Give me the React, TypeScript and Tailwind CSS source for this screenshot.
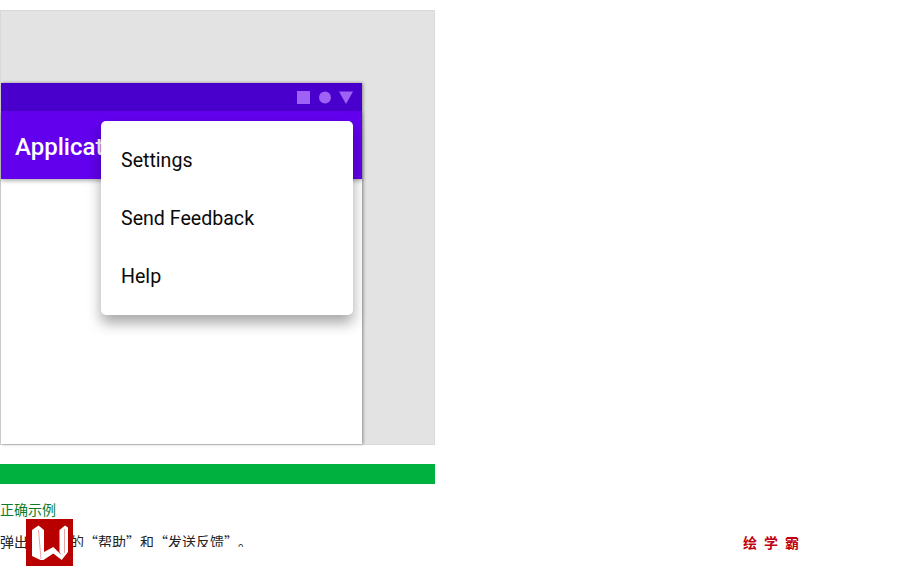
const cjk = "font-['Microsoft_YaHei','Noto_Sans_CJK_SC',sans-serif]";

function StatusIcons() {
  return (
    <div className="flex items-center justify-end gap-[9px] h-[28px] pr-[9px] bg-[#4a00cc]">
      <svg width="13" height="13" viewBox="0 0 13 13">
        <rect width="13" height="13" fill="#9e62f5" />
      </svg>
      <svg width="12" height="13" viewBox="0 0 12 13">
        <circle cx="6" cy="6.5" r="6" fill="#9e62f5" />
      </svg>
      <svg width="14" height="13" viewBox="0 0 14 13" className="-ml-px">
        <path d="M0 0.5H14L7 13Z" fill="#9e62f5" />
      </svg>
    </div>
  );
}

function Logo() {
  return (
    <svg width="47" height="47" viewBox="0 0 47 47" className="absolute left-[26px] top-[519px]">
      <rect width="47" height="47" fill="#b90000" />
      <path
        d="M6 11L12.5 6.5L18 11V33L27.3 28L35.5 36L33.5 33V11L39 6.5L42 8.5V33L35.7 41L27.3 34.5L17.5 41L14.5 41L6 37Z"
        fill="#fff"
      />
      <path d="M12.5 11L15 40" stroke="#e8a8a8" strokeWidth="1" />
      <path d="M38.5 10V34" stroke="#e8a8a8" strokeWidth="1" />
    </svg>
  );
}

export default function App() {
  return (
    <div className="relative h-[585px] w-[899px] overflow-hidden bg-white">
      <div className="w-[435px] pt-[10px]">
        <div className="h-[435px] border border-[#d9d9d9] bg-[#e3e3e3] pt-[72px]">
          <div className="relative h-[361px] w-[361px] bg-white shadow-[1px_0_3px_rgba(0,0,0,0.4)]">
            <StatusIcons />
            <div className="flex h-[68px] items-center bg-[#6200ee] pl-[14px] pt-[3px] font-['Roboto',sans-serif] text-[24px] font-medium text-white shadow-[0_2px_4px_rgba(0,0,0,0.3)]">
              Application
            </div>
            <div className="absolute left-[100px] top-[38px] w-[252px] rounded-[5px] bg-white pt-[11px] pb-[9px] font-['Roboto',sans-serif] text-[19.6px] text-[#0a0a0a] shadow-[0_8px_14px_rgba(0,0,0,0.35)]">
              <div className="flex h-[58px] items-center pl-[20px]">Settings</div>
              <div className="flex h-[58px] items-center pl-[20px]">Send Feedback</div>
              <div className="flex h-[58px] items-center pl-[20px]">Help</div>
            </div>
          </div>
        </div>
        <div className="mt-[19px] h-[20px] bg-[#00b140]" />
        <div className={`mt-[15px] text-[14px] leading-[20px] text-[#0a7d2c] ${cjk}`}>正确示例</div>
        <div className={`mt-[12px] whitespace-nowrap text-[14px] leading-[20px] text-[#222] [text-spacing-trim:space-all] ${cjk}`}>
          弹出菜单中的“帮助”和“发送反馈”。
        </div>
      </div>
      <div className="absolute left-[74px] top-[547px] h-[10px] w-[172px] bg-white" />
      <Logo />
      <div className={`absolute left-[743px] top-[534px] flex gap-[7px] text-[14px] font-bold leading-[16px] text-[#c00010] ${cjk}`}>
        <span>绘</span>
        <span>学</span>
        <span>霸</span>
      </div>
    </div>
  );
}
